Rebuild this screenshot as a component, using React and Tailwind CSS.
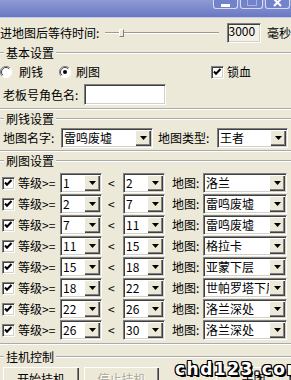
import React from "react";

const sunken =
  "border border-solid border-t-[#808080] border-l-[#808080] border-r-white border-b-white shadow-[inset_1px_1px_0_#404040,inset_-1px_-1px_0_#d4d0c8]";
const raised =
  "bg-[#ece9d8] shadow-[inset_1px_1px_0_#ffffff,inset_-1px_-1px_0_#404040,inset_-2px_-2px_0_#808080]";

function Arrow() {
  return (
    <svg width="7" height="4" viewBox="0 0 7 4">
      <path d="M0 0 H7 L3.5 4 Z" fill="#000" />
    </svg>
  );
}

function Combo({ value, w }) {
  return (
    <div className={`flex h-[20px] bg-white ${sunken} ${w} shrink-0`}>
      <div className="flex-1 min-w-0 flex items-center pl-[2px] overflow-hidden whitespace-nowrap leading-[14px]">
        {value}
      </div>
      <div className={`w-[16px] my-[1px] mr-[1px] flex items-center justify-center ${raised}`}>
        <Arrow />
      </div>
    </div>
  );
}

function Check({ className = "" }) {
  return (
    <span className={`relative w-[13px] h-[13px] bg-white shrink-0 ${sunken} ${className}`}>
      <svg width="11" height="11" viewBox="0 0 11 11" className="block">
        <path d="M2 4.5 L4 6.8 L8.5 2" stroke="#000" strokeWidth="2" fill="none" />
      </svg>
    </span>
  );
}

function Radio({ checked, className = "" }) {
  return (
    <svg width="12" height="12" viewBox="0 0 12 12" className={`shrink-0 ${className}`}>
      <circle cx="6" cy="6" r="5.5" fill="#fff" />
      <path d="M10 2 A5.6 5.6 0 0 0 2 10" stroke="#808080" fill="none" />
      <path d="M9.2 2.8 A4.5 4.5 0 0 0 2.8 9.2" stroke="#404040" fill="none" />
      <path d="M10 2 A5.6 5.6 0 0 1 2 10" stroke="#ffffff" fill="none" />
      {checked && <circle cx="6" cy="6" r="2" fill="#000" />}
    </svg>
  );
}

function Group({ title, className = "", children }) {
  return (
    <fieldset
      className={`min-w-0 m-0 p-0 border-0 border-t-2 border-b-2 [border-style:groove] border-white ${className}`}
    >
      <legend className="ml-[4px] px-[2px] leading-[14px]">{title}</legend>
      {children}
    </fieldset>
  );
}

const levelRows = [
  ["1", "2", "洛兰"],
  ["2", "7", "雷鸣废墟"],
  ["7", "11", "雷鸣废墟"],
  ["11", "15", "格拉卡"],
  ["15", "18", "亚蒙下层"],
  ["18", "22", "世帕罗塔下层"],
  ["22", "26", "洛兰深处"],
  ["26", "30", "洛兰深处"],
];

export default function App() {
  return (
    <div className="relative w-[291px] h-[380px] overflow-hidden bg-[#ece9d8] text-black text-[12px] leading-[14px] font-['Noto_Sans_CJK_SC','Noto_Sans',sans-serif]">
      {/* title bar */}
      <div className="h-[18px] bg-linear-to-b from-[#8f9bd6] to-[#6a78c3] border-b border-[#c3c9e6] flex justify-end items-start pr-[1px] gap-[2px]">
        <div className="w-[25px] h-[9px] rounded-b-[3px] border border-t-0 border-[#d6dbf2] bg-[#7383cb] flex items-end justify-center pb-[1px]">
          <div className="w-[9px] h-[3px] bg-white" />
        </div>
        <div className="w-[23px] h-[9px] rounded-b-[3px] border border-t-0 border-[#d6dbf2] bg-[#7383cb] flex justify-center">
          <div className="w-[10px] h-[6px] border border-t-0 border-[#a9b3e0]" />
        </div>
        <div className="w-[25px] h-[9px] rounded-b-[3px] border border-t-0 border-[#d6dbf2] bg-[#7383cb] flex justify-center">
          <svg width="10" height="7" viewBox="0 0 10 7">
            <path d="M1 -1 L8 6 M8 -1 L1 6" stroke="#fff" strokeWidth="2" />
          </svg>
        </div>
      </div>

      {/* wait time row */}
      <div className="flex items-center h-[20px] mt-[5px]">
        <span className="w-[105px] whitespace-nowrap">进地图后等待时间:</span>
        <div className="relative ml-[2px] w-[115px] h-[12px] flex items-center">
          <div className="w-full h-[2px] border-t border-[#9d9a8a] bg-white" />
          <div className="absolute left-[14px] top-[2px] w-[5px] h-[8px] bg-[#ece9d8] border border-[#808080] border-t-white border-l-white" />
        </div>
        <div className={`ml-[8px] w-[35px] h-[20px] ${sunken} bg-[#f4f2e8] pl-[1px] leading-[14px]`}>3000</div>
        <span className="ml-[6px] whitespace-nowrap">毫秒</span>
      </div>

      {/* basic settings */}
      <Group title="基本设置" className="mt-[3px] pb-[3px]">
        <div className="flex items-center h-[18px] mt-[3px]">
          <Radio />
          <span className="ml-[7px]">刷钱</span>
          <Radio checked className="ml-[16px]" />
          <span className="ml-[5px]">刷图</span>
          <Check className="ml-[111px]" />
          <span className="ml-[3px]">锁血</span>
        </div>
        <div className="flex items-center h-[21px] mt-[3px]">
          <span className="ml-[3px] w-[81px] whitespace-nowrap">老板号角色名:</span>
          <div className={`w-[82px] h-[21px] bg-white ${sunken}`} />
        </div>
      </Group>

      {/* money settings */}
      <Group title="刷钱设置" className="mt-[2px] pb-[2px]">
        <div className="flex items-center h-[20px] mt-[2px]">
          <span className="ml-[3px] w-[58px] whitespace-nowrap">地图名字:</span>
          <Combo value="雷鸣废墟" w="w-[92px]" />
          <span className="ml-[5px] w-[59px] whitespace-nowrap">地图类型:</span>
          <Combo value="王者" w="w-[71px]" />
        </div>
      </Group>

      {/* map settings */}
      <Group title="刷图设置" className="mt-[2px] pb-[3px]">
        <div className="flex flex-col gap-[1px] mt-[5px]">
          {levelRows.map(([a, b, m], i) => (
            <div key={i} className="flex items-center h-[20px]">
              <Check className="ml-[2px]" />
              <span className="ml-[3px] w-[42px] whitespace-nowrap">等级&gt;=</span>
              <Combo value={a} w="w-[42px]" />
              <span className="ml-[6px] w-[15px]">&lt;</span>
              <Combo value={b} w="w-[42px]" />
              <span className="ml-[7px] w-[31px] whitespace-nowrap">地图:</span>
              <Combo value={m} w="w-[84px]" />
            </div>
          ))}
        </div>
      </Group>

      {/* control */}
      <Group title="挂机控制" className="mt-[5px] border-b-0">
        <div className="flex mt-[3px]">
          <div className={`ml-[3px] w-[76px] h-[24px] flex items-center justify-center ${raised}`}>开始挂机</div>
          <div className={`ml-[5px] w-[75px] h-[24px] flex items-center justify-center ${raised} text-[#aca899] [text-shadow:1px_1px_0_#fff]`}>
            停止挂机
          </div>
          <div className={`ml-[57px] w-[75px] h-[24px] flex items-center justify-center ${raised}`}>关闭</div>
        </div>
      </Group>

      {/* watermark */}
      <div className="absolute left-[175px] top-[360px] font-['DejaVu_Sans',sans-serif] font-bold text-[17px] leading-[18px] tracking-[1.5px] text-white [text-shadow:1px_0_0_#000,-1px_0_0_#000,0_1px_0_#000,0_-1px_0_#000,1px_1px_0_#000,-1px_-1px_0_#000,1px_-1px_0_#000,-1px_1px_0_#000,2px_2px_0_#000]">
        chd123.com
      </div>
    </div>
  );
}
